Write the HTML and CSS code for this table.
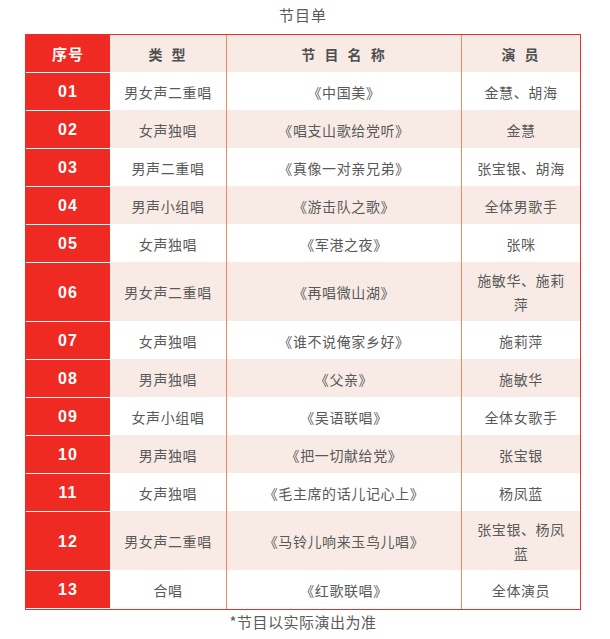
FILE: index.html
```html
<!DOCTYPE html>
<html lang="zh-CN">
<head>
<meta charset="utf-8">
<title>节目单</title>
<link rel="stylesheet" href="styles.css">
</head>
<body>
<div class="page">
  <p class="title">节目单</p>
  <table class="program">
    <colgroup>
      <col class="c-no"><col class="c-type"><col class="c-name"><col class="c-cast">
    </colgroup>
    <thead>
      <tr><th class="no">序号</th><th class="mid">类 型</th><th class="mid">节 目 名 称</th><th>演 员</th></tr>
    </thead>
    <tbody>
      <tr><td class="no">01</td><td class="mid">男女声二重唱</td><td class="mid">《中国美》</td><td>金慧、胡海</td></tr>
      <tr><td class="no">02</td><td class="mid">女声独唱</td><td class="mid">《唱支山歌给党听》</td><td>金慧</td></tr>
      <tr><td class="no">03</td><td class="mid">男声二重唱</td><td class="mid">《真像一对亲兄弟》</td><td>张宝银、胡海</td></tr>
      <tr><td class="no">04</td><td class="mid">男声小组唱</td><td class="mid">《游击队之歌》</td><td>全体男歌手</td></tr>
      <tr><td class="no">05</td><td class="mid">女声独唱</td><td class="mid">《军港之夜》</td><td>张咪</td></tr>
      <tr><td class="no">06</td><td class="mid">男女声二重唱</td><td class="mid">《再唱微山湖》</td><td>施敏华、施莉萍</td></tr>
      <tr><td class="no">07</td><td class="mid">女声独唱</td><td class="mid">《谁不说俺家乡好》</td><td>施莉萍</td></tr>
      <tr><td class="no">08</td><td class="mid">男声独唱</td><td class="mid">《父亲》</td><td>施敏华</td></tr>
      <tr><td class="no">09</td><td class="mid">女声小组唱</td><td class="mid">《吴语联唱》</td><td>全体女歌手</td></tr>
      <tr><td class="no">10</td><td class="mid">男声独唱</td><td class="mid">《把一切献给党》</td><td>张宝银</td></tr>
      <tr><td class="no">11</td><td class="mid">女声独唱</td><td class="mid">《毛主席的话儿记心上》</td><td>杨凤蓝</td></tr>
      <tr><td class="no">12</td><td class="mid">男女声二重唱</td><td class="mid">《马铃儿响来玉鸟儿唱》</td><td>张宝银、杨凤蓝</td></tr>
      <tr class="last"><td class="no">13</td><td class="mid">合唱</td><td class="mid">《红歌联唱》</td><td>全体演员</td></tr>
    </tbody>
  </table>
  <p class="note">*节目以实际演出为准</p>
</div>
</body>
</html>
```

FILE: styles.css
```css
html, body {
  margin: 0;
  padding: 0;
  background: #ffffff;
}

body {
  font-family: "Noto Sans CJK SC", "Noto Sans", sans-serif;
  color: #595959;
}

.page {
  width: 556px;
  margin-left: 25px;
}

.title {
  margin: 0;
  height: 34px;
  line-height: 30px;
  text-align: center;
  font-size: 15px;
  letter-spacing: 1px;
  color: #5a5a5a;
}

.program {
  width: 556px;
  table-layout: fixed;
  border-collapse: separate;
  border-spacing: 0;
  border: 1px solid #e8302a;
  font-size: 14px;
  letter-spacing: 0.6px;
}

.c-no { width: 84px; }
.c-type { width: 117px; }
.c-name { width: 235px; }
.c-cast { width: 118px; }

.program th,
.program td {
  padding: 6px 12px 5px;
  line-height: 24px;
  text-align: center;
  vertical-align: middle;
  font-weight: normal;
}

.program thead tr { height: 37px; }
.program tbody tr { height: 38px; }
.program tbody tr.last { height: 39px; }

.program thead th {
  background: #f8ebe6;
  font-weight: bold;
  color: #4f4f4f;
  letter-spacing: 2px;
  word-spacing: 2px;
}

.program tbody tr:nth-child(even) td { background: #f8ebe6; }
.program tbody tr:nth-child(odd) td { background: #ffffff; }

.program .mid { border-right: 1px solid #f5895a; }

.program th.no,
.program td.no,
.program tbody tr:nth-child(even) td.no,
.program tbody tr:nth-child(odd) td.no {
  background: #ee2a22;
  color: #ffffff;
  font-weight: bold;
  padding-left: 0;
  padding-right: 0;
}

.program thead th.no {
  font-size: 15px;
  letter-spacing: 1px;
  color: #ffffff;
}

.program td.no {
  font-family: "Liberation Sans", Arial, sans-serif;
  font-size: 16px;
  letter-spacing: 1px;
  border-top: 1px solid #ffffff;
}

.program tr.last td.no { border-bottom: 1px solid #ffffff; }

.note {
  margin: 0;
  line-height: 24px;
  text-align: center;
  font-size: 15px;
  letter-spacing: 0.5px;
  color: #5a5a5a;
}
```
